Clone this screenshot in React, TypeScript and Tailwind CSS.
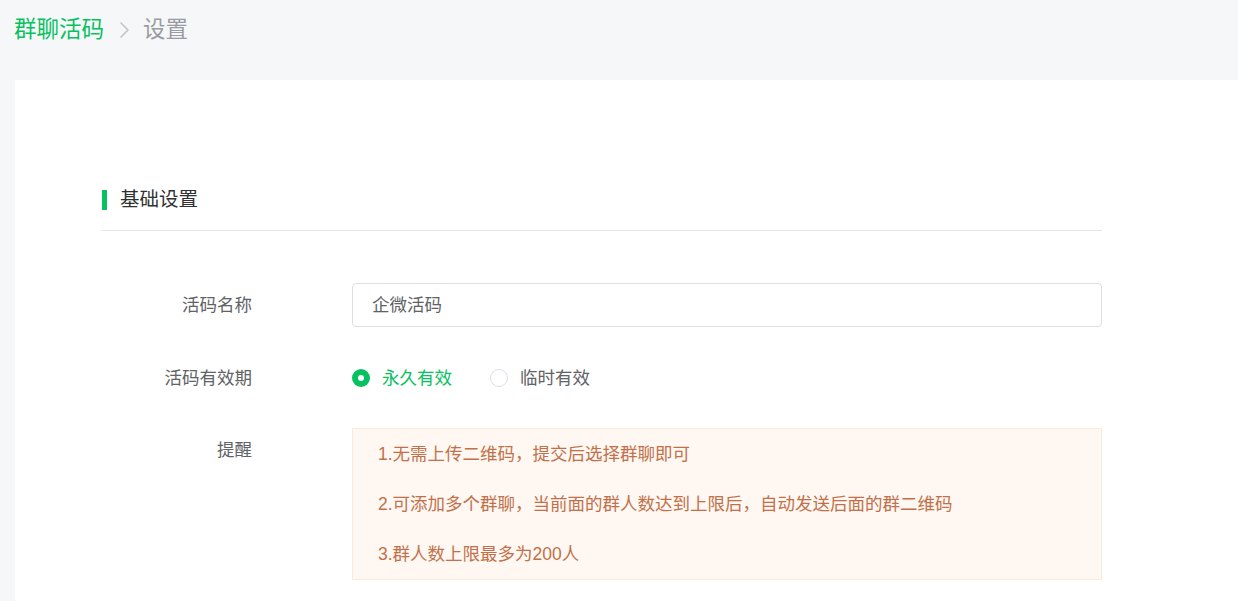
import React from "react";

const font = "font-['Liberation_Sans','Noto_Sans_CJK_SC',sans-serif]";

export default function App() {
  return (
    <div className={`min-h-screen bg-[#f6f7f9] ${font}`}>
      <div className="h-[60px] pl-[14px] flex items-center text-[22.5px]">
        <span className="text-[#07c160]">群聊活码</span>
        <svg className="ml-[13px] mr-[12px]" width="14" height="20" viewBox="0 0 14 20" fill="none">
          <path d="M4 3 L11 10 L4 17" stroke="#c0c4cc" strokeWidth="1.6" strokeLinecap="round" strokeLinejoin="round" />
        </svg>
        <span className="text-[#9a9ca2]">设置</span>
      </div>
      <div className="mt-[20px] ml-[15px] bg-white pt-[105px] pl-[86px] pb-[120px]">
        <div className="w-[1001px]">
          <div className="pb-[15px] border-b border-[#e6e6e6]">
            <div className="h-[30px] flex items-center pl-[1px]">
              <div className="w-[5px] h-[20px] bg-[#07c160]"></div>
              <span className="ml-[13px] text-[19.5px] text-[#303133]">基础设置</span>
            </div>
          </div>

          <div className="mt-[52px] flex items-center h-[44px]">
            <div className="w-[251px] pr-[100px] text-right text-[17.5px] text-[#606266]">活码名称</div>
            <div className="w-[750px] h-[44px] border border-[#dcdfe6] rounded-[4px] flex items-center pl-[19px] text-[17.5px] text-[#606266]">
              企微活码
            </div>
          </div>

          <div className="mt-[31px] flex items-center h-[40px]">
            <div className="w-[251px] pr-[100px] text-right text-[17.5px] text-[#606266]">活码有效期</div>
            <div className="flex items-center text-[17.5px]">
              <div className="flex items-center">
                <span className="w-[18px] h-[18px] rounded-full bg-[#07c160] flex items-center justify-center">
                  <span className="w-[6px] h-[6px] rounded-full bg-white"></span>
                </span>
                <span className="ml-[12px] text-[#07c160]">永久有效</span>
              </div>
              <div className="flex items-center ml-[38px]">
                <span className="w-[18px] h-[18px] rounded-full border border-[#dcdfe6] bg-white"></span>
                <span className="ml-[12px] text-[#606266]">临时有效</span>
              </div>
            </div>
          </div>

          <div className="mt-[30px] flex items-start">
            <div className="w-[251px] pr-[100px] text-right text-[17.5px] leading-[44px] text-[#606266]">提醒</div>
            <div className="w-[750px] border border-[#fbe9dc] bg-[#fff7f1] pl-[25px] text-[17.5px] leading-[50px] text-[#c0714b]">
              <div>1.无需上传二维码，提交后选择群聊即可</div>
              <div>2.可添加多个群聊，当前面的群人数达到上限后，自动发送后面的群二维码</div>
              <div>3.群人数上限最多为200人</div>
            </div>
          </div>
        </div>
      </div>
    </div>
  );
}
